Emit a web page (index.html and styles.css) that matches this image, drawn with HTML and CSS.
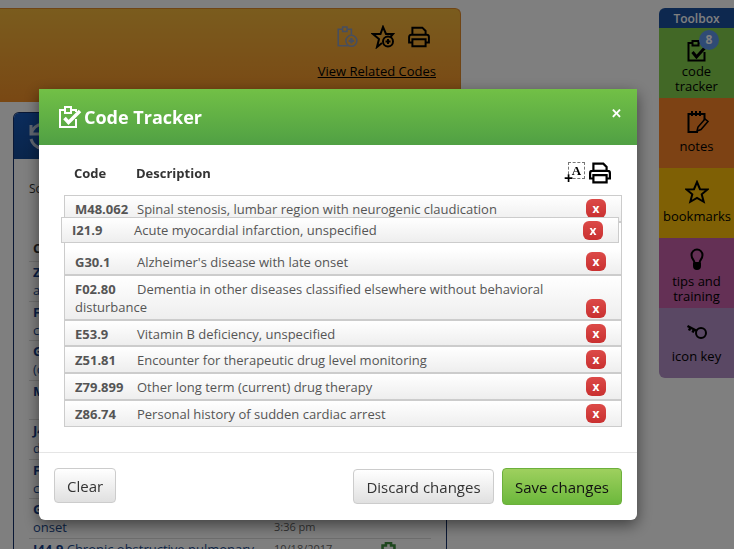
FILE: index.html
```html
<!DOCTYPE html>
<html lang="en">
<head>
    <meta charset="UTF-8">
    <title>Code Tracker</title>
    <link rel="stylesheet" href="styles.css">
</head>
<body>
    <div class="page">
        <div class="content">
            <div class="code-banner">
                <div class="banner-icons">
                    <svg class="ico ico-faded" viewBox="0 0 20 20"><path d="M11 18H2V3h4V1h4v2h4v5M6 3v2h4V3"/><circle cx="14" cy="13.500" r="5"/><path d="M14 11v5M11.500 13.500h5" stroke-width="2"/></svg>
                    <svg class="ico ico-star" viewBox="0 0 24 24"><path d="M11 18l-5 4 2-8-6-5h7.500L12 2l3 7h7l-3 3.500"/><circle cx="17" cy="16.500" r="5"/><path d="M17 14v5M14.500 16.500h5" stroke-width="2"/></svg>
                    <svg class="ico ico-print" viewBox="0 0 20 20"><path d="M4 8V1.500h9l3 3V8M4 15H1V10q0-2 2-2h14q2 0 2 2v5h-3M4 12h12v6.500H4z" stroke-width="1.800"/></svg>
                </div>
                <a class="related-link" href="#">View Related Codes</a>
            </div>
            <div class="history-panel">
                <div class="history-head">
                    <svg class="history-icon" viewBox="0 0 32 32"><path d="M5 7v9h9M5 16A14 14 0 0 1 30 12M5 21A13 13 0 0 0 28 25"/></svg>
                </div>
                <div class="history-body">
                    <div class="history-sort">Sort by</div>
                    <div class="history-title">Code</div>
                    <div class="history-row"><div class="history-text"><b>Z23</b> Encounter for immunization<br>and vaccination</div></div>
                    <div class="history-row"><div class="history-text"><b>F02.80</b> Dementia in other diseases<br>classified elsewhere</div></div>
                    <div class="history-row"><div class="history-text"><b>G30.9</b> Alzheimer's disease<br>(code first)</div></div>
                    <div class="history-row"><div class="history-text"><b>M48.062</b> Spinal stenosis</div></div>
                    <div class="history-row"><div class="history-text"><b>J44.9</b> Chronic obstructive pulmonary<br>disease</div></div>
                    <div class="history-row"><div class="history-text"><b>F02.80</b> Dementia in other diseases<br>classified elsewhere</div></div>
                    <div class="history-row"><div class="history-text"><b>G30.1</b> Alzheimer's disease with late<br>onset</div><div class="history-date">10/18/2017<br>3:36 pm</div></div>
                    <div class="history-row"><div class="history-text"><b>I44.9</b> Chronic obstructive pulmonary</div><div class="history-date">10/18/2017</div>
                        <svg class="history-clip" viewBox="0 0 20 20"><path d="M3 19V4h4V1h6v3h4v15z"/></svg>
                    </div>
                </div>
            </div>
        </div>
        <div class="toolbox">
            <div class="toolbox-head">Toolbox</div>
            <div class="tool tool-two tool-green">
                <svg class="tool-icon" viewBox="0 0 24 24"><path d="M19.500 14v8.500h-16V5h4V3h6v2h4v3M7.500 5v2.500h6V5"/><path d="M7.500 14l4 5 9-10" stroke-width="3"/></svg>
                <span class="tool-badge">8</span>
                <div>code tracker</div>
            </div>
            <div class="tool tool-orange">
                <svg class="tool-icon" viewBox="0 0 24 24"><path d="M13 22H3.500V4h16v7M7 1v5M11 1v5M15 1v5"/><path class="pencil" d="M12 21l1-4 7-8 3 2.500-7 8z" stroke-width="1.500"/></svg>
                <div>notes</div>
            </div>
            <div class="tool tool-yellow">
                <svg class="tool-icon" viewBox="0 0 24 24"><path d="M12 2l3 7.200 7.500.3-5.800 4.800 2 7.500L12 18l-6.700 3.800 2-7.500L1.500 9.500 9 9.200z"/></svg>
                <div>bookmarks</div>
            </div>
            <div class="tool tool-two tool-pink">
                <svg class="tool-icon" viewBox="0 0 24 24"><path d="M9.500 15c0-3-3-4-3-8a5.500 5.500 0 0 1 11 0c0 4-3 5-3 8z"/><path class="solid" d="M9 15.500h6v2.500a3 3 0 0 1-6 0z"/></svg>
                <div>tips and training</div>
            </div>
            <div class="tool tool-purple">
                <svg class="tool-icon" viewBox="0 0 24 24"><circle cx="16" cy="13" r="5"/><path d="M12 11L2.500 6M5.500 7.500L4 10.500M9 9.500l-1.500 3" stroke-width="2.500"/></svg>
                <div>icon key</div>
            </div>
        </div>
    </div>

    <div class="overlay"></div>

    <div class="modal">
        <div class="modal-header">
            <svg class="modal-icon" viewBox="0 0 24 24"><path d="M18 14v8H2V5h5V2h6v3h5v2M7 5v3h6V5"/><path d="M6.500 13l4 4.500L22 6" stroke-width="3.500"/></svg>
            <h3 class="modal-title">Code Tracker</h3>
            <span class="modal-close">&#10005;</span>
        </div>
        <div class="modal-body">
            <div class="tracker-head">
                <span class="col-code">Code</span>
                <span class="col-desc">Description</span>
                <span class="font-icon"><span class="font-box">A</span><span class="font-plus">+</span></span>
                <svg class="ico ico-print-big" viewBox="0 0 20 20"><path d="M4 8V1.500h9l3 3V8M4 15H1V10q0-2 2-2h14q2 0 2 2v5h-3M4 12h12v6.500H4z" stroke-width="2"/></svg>
            </div>
            <ul class="tracker-list">
                <li class="tracker-row"><span class="code">M48.062</span>Spinal stenosis, lumbar region with neurogenic claudication<button class="remove">x</button></li>
                <li class="tracker-gap"></li>
                <li class="tracker-row"><span class="code">G30.1</span>Alzheimer's disease with late onset<button class="remove">x</button></li>
                <li class="tracker-row tracker-row-wrap"><span class="code">F02.80</span>Dementia in other diseases classified elsewhere without behavioral disturbance<button class="remove">x</button></li>
                <li class="tracker-row tracker-row-short"><span class="code">E53.9</span>Vitamin B deficiency, unspecified<button class="remove">x</button></li>
                <li class="tracker-row"><span class="code">Z51.81</span>Encounter for therapeutic drug level monitoring<button class="remove">x</button></li>
                <li class="tracker-row"><span class="code">Z79.899</span>Other long term (current) drug therapy<button class="remove">x</button></li>
                <li class="tracker-row"><span class="code">Z86.74</span>Personal history of sudden cardiac arrest<button class="remove">x</button></li>
            </ul>
            <div class="tracker-row tracker-drag"><span class="code">I21.9</span>Acute myocardial infarction, unspecified<button class="remove">x</button></div>
        </div>
        <div class="modal-footer">
            <button class="btn btn-clear">Clear</button>
            <button class="btn btn-discard">Discard changes</button>
            <button class="btn btn-save">Save changes</button>
        </div>
    </div>
</body>
</html>
```

FILE: styles.css
```css
html, body {
    margin: 0;
    height: 100%;
    overflow: hidden;
}

body {
    font-family: "Open Sans", sans-serif;
    font-size: 13px;
    color: #333;
    background: #fff;
}

svg {
    display: block;
    fill: none;
    stroke: #000;
    stroke-width: 2;
}

.page {
    display: flex;
    justify-content: space-between;
    height: 549px;
    padding-top: 8px;
    box-sizing: border-box;
    overflow: hidden;
}

.content {
    width: 461px;
}

.code-banner {
    height: 94px;
    box-sizing: border-box;
    padding: 16px 24px 0 0;
    background: linear-gradient(#f5b83c, #f39028);
    border: 1px solid #e08a2a;
    border-left: 0;
    border-bottom: 0;
    border-top-right-radius: 6px;
    display: flex;
    flex-direction: column;
    align-items: flex-end;
}

.banner-icons {
    display: flex;
    align-items: center;
    gap: 13px;
    height: 24px;
    margin-right: 6px;
}

.ico {
    width: 22px;
    height: 22px;
}

.ico-faded {
    stroke: #8c9cc0;
    stroke-width: 1.400;
}

.ico-star {
    width: 24px;
    height: 24px;
}

.related-link {
    margin-top: 13px;
    color: #000;
    font-size: 13px;
}

.history-panel {
    margin: 10px 14px 0 13px;
    border: 1px solid #14306a;
    border-bottom: 0;
    border-radius: 6px 6px 0 0;
    height: 437px;
    box-sizing: border-box;
    overflow: hidden;
}

.history-head {
    height: 46px;
    background: linear-gradient(#1658b8, #144a96);
    padding: 5px 0 0 12px;
    box-sizing: border-box;
}

.history-icon {
    width: 32px;
    height: 32px;
    stroke: #c4d0e4;
    stroke-width: 3;
}

.history-body {
    padding: 21px 15px 0 15px;
}

.history-sort {
    font-size: 12px;
    height: 59px;
}

.history-title {
    font-weight: 700;
    font-size: 13px;
    line-height: 18px;
    padding: 0 0 4px 4px;
    border-bottom: 1px solid #ddd;
}

.history-row {
    display: flex;
    height: 38.500px;
    border-bottom: 1px solid #ddd;
    position: relative;
    gap: 6px;
}

.history-text {
    width: 235px;
    padding: 1px 0 0 4px;
    line-height: 18px;
    color: #1a4a8e;
}

.history-text b {
    color: #14408a;
}

.history-date {
    padding-top: 1px;
    font-size: 11px;
    line-height: 18px;
    color: #666;
}

.history-clip {
    position: absolute;
    left: 351px;
    top: 3px;
    width: 17px;
    height: 17px;
    stroke: #3c8c3c;
    stroke-width: 3;
}

.toolbox {
    width: 75px;
    height: 370px;
    color: #000;
    text-align: center;
    line-height: 15px;
}

.toolbox-head {
    height: 20px;
    line-height: 21px;
    font-weight: 600;
    font-size: 12px;
    color: #fff;
    background: #1a509f;
    border-radius: 6px 0 0 0;
}

.tool {
    height: 70px;
    box-sizing: border-box;
    padding: 12px 4px 0;
    position: relative;
}

.tool-two {
    padding-top: 10px;
}

.tool-icon {
    width: 24px;
    height: 24px;
    margin: 0 auto 5px;
}

.tool-two .tool-icon {
    margin-bottom: 2px;
}

.tool-icon .solid {
    fill: #000;
}

.tool-icon .pencil {
    fill: #fa8428;
}

.tool-green {
    background: #84d04c;
}

.tool-orange {
    background: #fa8428;
}

.tool-yellow {
    background: #ffc00a;
}

.tool-pink {
    background: #c860aa;
}

.tool-purple {
    background: #b490c8;
    border-radius: 0 0 0 6px;
}

.tool-badge {
    position: absolute;
    left: 40px;
    top: 2px;
    width: 20px;
    height: 20px;
    line-height: 20px;
    border-radius: 50%;
    background: #5f96ea;
    color: #fff;
    font-weight: 700;
    font-size: 12px;
}

.overlay {
    position: fixed;
    inset: 0;
    background: rgba(0, 0, 0, 0.5);
}

.modal {
    position: fixed;
    left: 39px;
    top: 89px;
    width: 598px;
    background: #fff;
    border-radius: 0 0 6px 6px;
    box-shadow: 0 5px 15px rgba(0, 0, 0, 0.5);
}

.modal-header {
    display: flex;
    align-items: center;
    height: 56px;
    box-sizing: border-box;
    padding: 0 15px 0 19px;
    background: linear-gradient(#72c046, #50a044);
    color: #fff;
}

.modal-icon {
    width: 24px;
    height: 24px;
    stroke: #fff;
    margin-right: 2px;
}

.modal-title {
    margin: 0;
    font-size: 18px;
    font-weight: 700;
    flex: 1;
}

.modal-close {
    font-size: 13px;
    font-weight: 700;
    margin-bottom: 8px;
}

.modal-body {
    position: relative;
    padding: 17px 15px 25px 25px;
    border-bottom: 1px solid #e5e5e5;
}

.tracker-head {
    display: flex;
    align-items: center;
    height: 22px;
    margin-bottom: 11px;
    font-weight: 700;
    color: #333;
}

.col-code {
    width: 62px;
    margin-left: 10px;
}

.col-desc {
    flex: 1;
}

.font-icon {
    position: relative;
    width: 21px;
    height: 22px;
    margin-right: 4px;
}

.font-box {
    display: block;
    width: 15px;
    height: 15px;
    margin-left: 4px;
    border: 1px dashed #777;
    font-family: "Liberation Serif", serif;
    font-weight: 700;
    font-size: 13px;
    line-height: 16px;
    text-align: center;
    color: #000;
}

.font-plus {
    position: absolute;
    left: 0;
    top: 8px;
    font-size: 16px;
    line-height: 16px;
    color: #000;
}

.ico-print-big {
    margin-right: 11px;
}

.tracker-list {
    list-style: none;
    margin: 0;
    padding: 0;
    border: 1px solid #ccc;
    width: 558px;
    box-sizing: border-box;
}

.tracker-row {
    position: relative;
    padding: 4px 45px 3px 10px;
    line-height: 18px;
    color: #555;
    background: linear-gradient(#fff, #eee);
    border-bottom: 2px solid #ccc;
}

.tracker-row:last-child {
    border-bottom: 0;
}

.tracker-row-short {
    padding-bottom: 2px;
}

.tracker-gap {
    height: 26px;
    background: #fff;
}

.code {
    display: inline-block;
    width: 62px;
    font-weight: 700;
    color: #555;
}

.tracker-drag {
    position: absolute;
    left: 22px;
    top: 72px;
    width: 558px;
    box-sizing: border-box;
    padding-top: 3px;
    border: 1px solid #ccc;
}

.tracker-drag:last-child {
    border-bottom: 1px solid #ccc;
}

.remove {
    position: absolute;
    right: 15px;
    top: 3px;
    width: 20px;
    height: 19px;
    padding: 0;
    border: 0;
    border-radius: 6px;
    background: linear-gradient(#dc4a48, #c93030);
    color: #fff;
    font: 700 12px/17px "Open Sans", sans-serif;
}

.tracker-row-wrap .remove {
    top: 23px;
}

.modal-footer {
    display: flex;
    align-items: center;
    padding: 15px;
    gap: 8px;
}

.btn {
    height: 35px;
    padding: 0 12px;
    border: 1px solid #ccc;
    border-radius: 4px;
    background: linear-gradient(#fff, #e0e0e0);
    color: #333;
    font: 15px "Open Sans", sans-serif;
}

.btn-clear {
    align-self: flex-start;
}

.btn-discard {
    margin-left: auto;
    min-width: 141px;
}

.btn-save {
    height: 37px;
    background: linear-gradient(#9ed05e, #6cb83c);
    border-color: #6cb03c;
    color: #111;
}
```
